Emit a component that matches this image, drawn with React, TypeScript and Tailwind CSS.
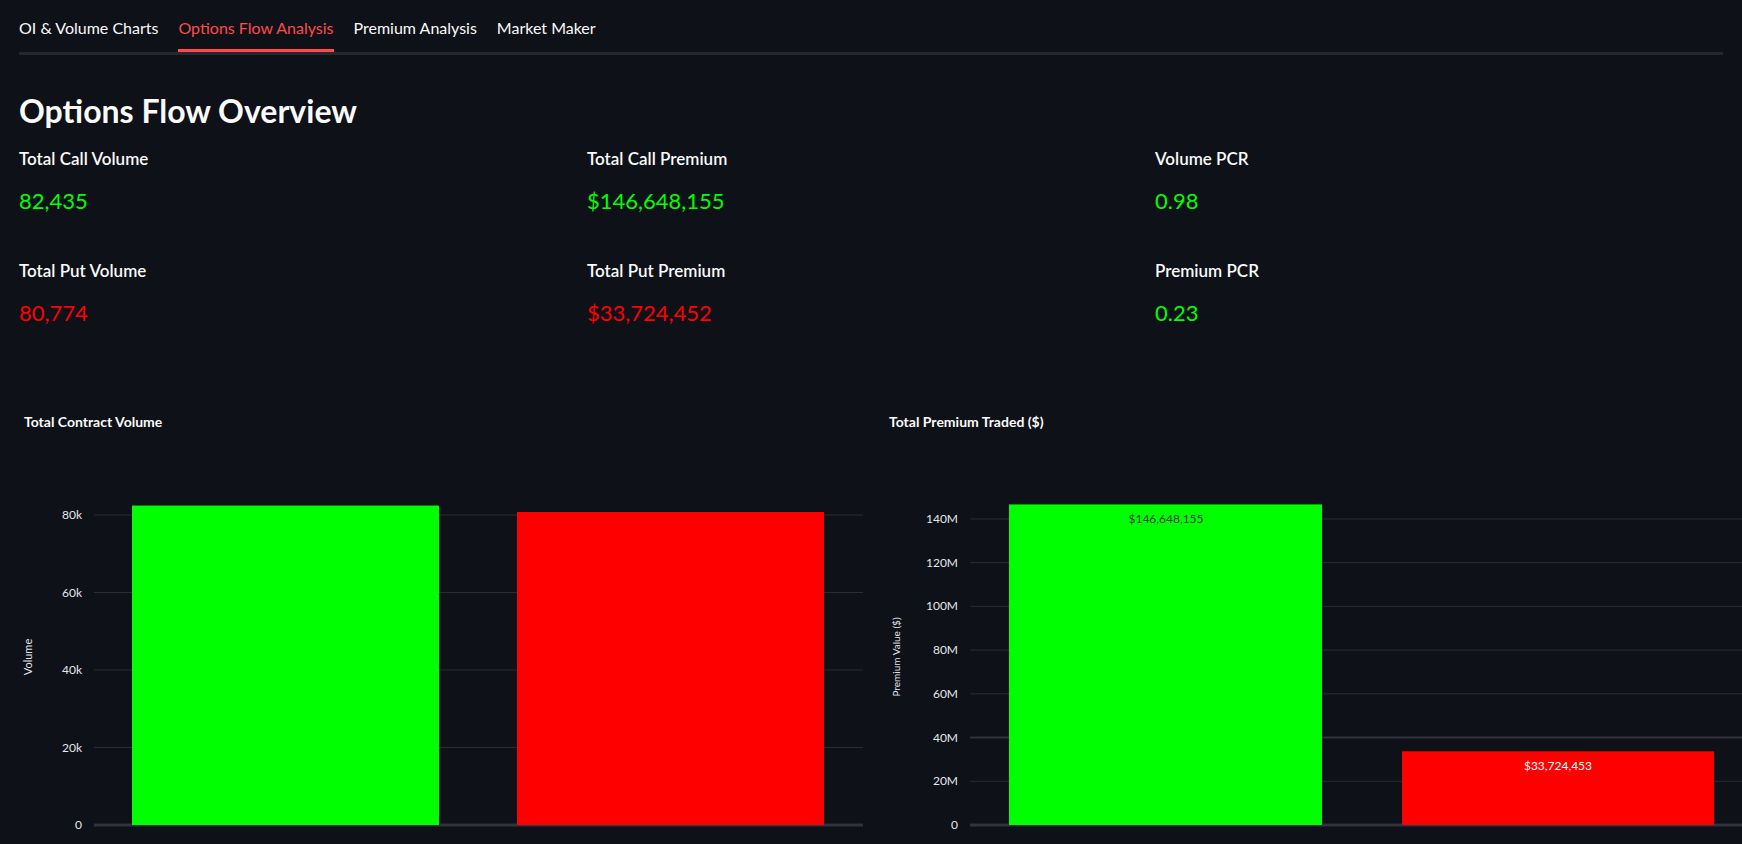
import React from "react";

const F = { fontFamily: "Lato, 'Noto Sans', sans-serif" };
const OFF = 450;

function Chart1() {
  const ticks = [0, 20, 40, 60, 80];
  const y = (k: number) => 838 - k * 3.875 - OFF;
  return (
    <svg width="870" height="394" className="block">
      {ticks.map((t) => (
        <g key={t}>
          <line x1="94" x2="863" y1={y(t)} y2={y(t)} stroke={t === 0 ? "#31333f" : "#2a2d36"} strokeWidth={t === 0 ? 3 : 1} />
          <text x="82" y={y(t) + 4} textAnchor="end" fill="#e5e7eb" fontSize="12" style={F}>{t === 0 ? "0" : `${t}k`}</text>
        </g>
      ))}
      <rect x="132" y={y(82.435)} width="307" height={838 - OFF - y(82.435)} fill="#00ff00" />
      <rect x="517" y={y(80.774)} width="307" height={838 - OFF - y(80.774)} fill="#ff0000" />
      <text transform={`translate(32 ${670 - OFF}) rotate(-90)`} textAnchor="middle" fill="#e5e7eb" fontSize="11" style={F}>Volume</text>
    </svg>
  );
}

function Chart2() {
  const ticks = [0, 20, 40, 60, 80, 100, 120, 140];
  const y = (m: number) => 838 - m * 2.186 - OFF;
  return (
    <svg width="872" height="394" className="block">
      {ticks.map((t) => (
        <g key={t}>
          <line x1="100" x2="872" y1={y(t)} y2={y(t)} stroke={t === 0 || t === 40 ? "#31333f" : "#2a2d36"} strokeWidth={t === 0 ? 3 : t === 40 ? 2 : 1} />
          <text x="88" y={y(t) + 4} textAnchor="end" fill="#e5e7eb" fontSize="12" style={F}>{t === 0 ? "0" : `${t}M`}</text>
        </g>
      ))}
      <rect x="139" y={y(146.648)} width="313" height={838 - OFF - y(146.648)} fill="#00ff00" />
      <rect x="532" y={y(33.724)} width="312" height={838 - OFF - y(33.724)} fill="#ff0000" />
      <text x="296" y={y(146.648) + 19} textAnchor="middle" fill="#3a3a3a" fontSize="12" style={F}>$146,648,155</text>
      <text x="688" y={y(33.724) + 19} textAnchor="middle" fill="#ffffff" fontSize="12" style={F}>$33,724,453</text>
      <text transform={`translate(30 ${670 - OFF}) rotate(-90)`} textAnchor="middle" fill="#e5e7eb" fontSize="10" style={F}>Premium Value ($)</text>
    </svg>
  );
}

function Metric({ label, value, color }: { label: string; value: string; color: string }) {
  return (
    <div className="flex flex-col">
      <div className="text-[17px] font-semibold text-[#fafafa] h-[28px] leading-[28px]">{label}</div>
      <div className={`text-[22px] h-[84px] pt-[14px] leading-[28px] ${color}`}>{value}</div>
    </div>
  );
}

export default function App() {
  return (
    <div className="w-[1742px] h-[844px] overflow-hidden bg-[#0e1117] text-[#fafafa]" style={F}>
      <div className="px-[19px]">
        <div className="flex gap-[20px] border-b-[3px] border-[#262730] h-[55px] items-start pt-[16px] text-[16px]">
          <div className="h-[36px]">OI &amp; Volume Charts</div>
          <div className="h-[36px] text-[#ff4b4b] border-b-[3px] border-[#ff4b4b] -mb-[3px]">Options Flow Analysis</div>
          <div className="h-[36px]">Premium Analysis</div>
          <div className="h-[36px]">Market Maker</div>
        </div>
        <h1 className="text-[32px] font-bold mt-[36px] leading-[40px]">Options Flow Overview</h1>
        <div className="grid grid-cols-3 mt-[14px]">
          <div>
            <Metric label="Total Call Volume" value="82,435" color="text-[#00ff00]" />
            <Metric label="Total Put Volume" value="80,774" color="text-[#ff0000]" />
          </div>
          <div>
            <Metric label="Total Call Premium" value="$146,648,155" color="text-[#00ff00]" />
            <Metric label="Total Put Premium" value="$33,724,452" color="text-[#ff0000]" />
          </div>
          <div>
            <Metric label="Volume PCR" value="0.98" color="text-[#00ff00]" />
            <Metric label="Premium PCR" value="0.23" color="text-[#00ff00]" />
          </div>
        </div>
      </div>
      <div className="flex mt-[42px]">
        <div className="w-[870px]">
          <div className="pl-[24px] text-[14px] font-bold h-[26px]">Total Contract Volume</div>
          <Chart1 />
        </div>
        <div className="w-[872px]">
          <div className="pl-[19px] text-[14px] font-bold h-[26px]">Total Premium Traded ($)</div>
          <Chart2 />
        </div>
      </div>
    </div>
  );
}
